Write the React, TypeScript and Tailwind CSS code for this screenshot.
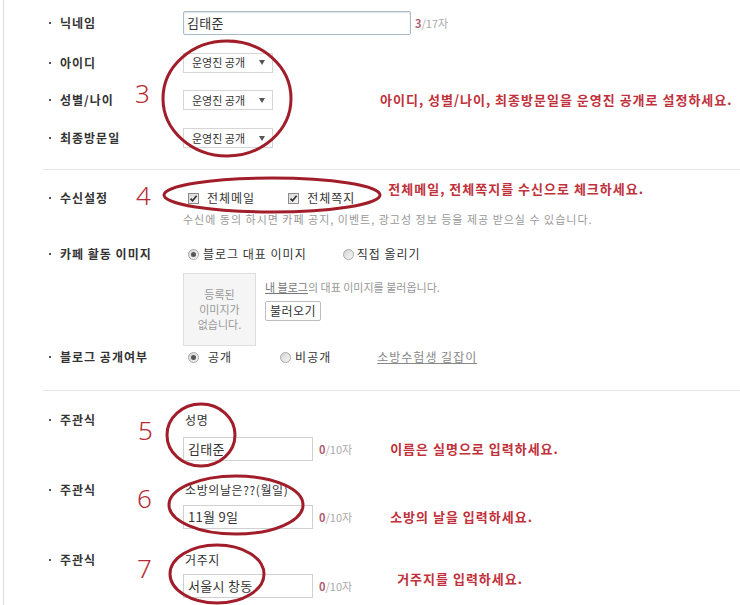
import React from "react";

function Label({ children }: { children: React.ReactNode }) {
  return (
    <div className="w-[179px] shrink-0 h-[20px] pl-[45px] flex items-center font-bold text-[12px] tracking-[1px] text-[#333]">
      <span className="w-[2px] h-[2px] bg-[#555] mr-[9px] shrink-0" />
      <span className="whitespace-nowrap">{children}</span>
    </div>
  );
}

function Select() {
  return (
    <div className="w-[90px] h-[20px] border border-[#d6d6d6] bg-white flex items-center justify-between pl-[8px] pr-[7px] text-[11px] text-[#333]">
      <span className="whitespace-nowrap">운영진 공개</span>
      <svg width="6" height="5" viewBox="0 0 6 5">
        <polygon points="0,0 6,0 3,5" fill="#555" />
      </svg>
    </div>
  );
}

function Checkbox() {
  return (
    <span className="w-[11px] h-[11px] border border-[#8c8c8c] bg-gradient-to-br from-[#d8d8d8] to-[#f7f7f7] flex items-center justify-center shrink-0">
      <svg width="9" height="9" viewBox="0 0 9 9">
        <path d="M1.5 4.6 L3.6 6.8 L7.6 1.8" stroke="#333" strokeWidth="1.7" fill="none" />
      </svg>
    </span>
  );
}

function Radio({ on }: { on?: boolean }) {
  return (
    <span className="w-[11px] h-[11px] rounded-full border border-[#a8a8a8] bg-gradient-to-br from-[#d4d4d4] to-[#f8f8f8] flex items-center justify-center shrink-0">
      {on ? <span className="w-[5px] h-[5px] rounded-full bg-[#555]" /> : null}
    </span>
  );
}

function Counter({ n, max }: { n: string; max: string }) {
  return (
    <span className="text-[11px] whitespace-nowrap">
      <b className="text-[#b06070]">{n}</b>
      <span className="text-[#aaa]">/{max}자</span>
    </span>
  );
}

function TextBox({ value }: { value: string }) {
  return (
    <div className="w-[130px] h-[24px] border border-[#d0d0d0] bg-white flex items-center pl-[4px] text-[13px] tracking-[0.3px] text-[#333] whitespace-nowrap">
      {value}
    </div>
  );
}

function Red({ children, className }: { children: React.ReactNode; className?: string }) {
  return (
    <span className={"text-[13px] font-bold tracking-[1px] text-[#c0313b] whitespace-nowrap " + (className ?? "")}>
      {children}
    </span>
  );
}

export default function App() {
  return (
    <div className="relative w-[740px] h-[605px] overflow-hidden bg-white font-['Noto_Sans_CJK_KR','Noto_Sans',sans-serif] text-[12px] text-[#333]">
      <div className="ml-[3px] h-full border-l border-[#dcdcdc] flex flex-col">
        {/* section A */}
        <div className="flex items-center h-[45px]">
          <Label>닉네임</Label>
          <div className="w-[228px] h-[24px] border border-[#a9bac9] rounded-[2px] shadow-[inset_0_1px_2px_rgba(0,0,0,0.12)] bg-white flex items-center pl-[3px] text-[13px] tracking-[0.3px] text-[#333]">
            김태준
          </div>
          <span className="ml-[4px]">
            <Counter n="3" max="17" />
          </span>
        </div>
        <div className="flex items-center h-[35px]">
          <Label>아이디</Label>
          <Select />
        </div>
        <div className="flex items-center h-[40px]">
          <Label>성별/나이</Label>
          <Select />
          <Red className="ml-[107px]">아이디, 성별/나이, 최종방문일을 운영진 공개로 설정하세요.</Red>
        </div>
        <div className="flex items-center h-[36px]">
          <Label>최종방문일</Label>
          <Select />
        </div>
        <div className="h-[13px] shrink-0" />
        <div className="ml-[39px] border-t border-[#e6e6e6]" />

        {/* section B */}
        <div className="flex pt-[18px]">
          <Label>수신설정</Label>
          <div className="flex flex-col">
            <div className="h-[20px] flex items-center text-[12px] tracking-[1px]">
              <span className="ml-[5px]">
                <Checkbox />
              </span>
              <span className="ml-[8px]">전체메일</span>
              <span className="ml-[33px]">
                <Checkbox />
              </span>
              <span className="ml-[8px]">전체쪽지</span>
              <Red className="ml-[33px] mb-[18px]">전체메일, 전체쪽지를 수신으로 체크하세요.</Red>
            </div>
            <div className="mt-[3px] h-[16px] leading-[16px] text-[11px] tracking-[1px] text-[#999] whitespace-nowrap">
              수신에 동의 하시면 카페 공지, 이벤트, 광고성 정보 등을 제공 받으실 수 있습니다.
            </div>
          </div>
        </div>

        <div className="flex items-center h-[20px] mt-[17px] tracking-[1px]">
          <Label>카페 활동 이미지</Label>
          <span className="ml-[5px]">
            <Radio on />
          </span>
          <span className="ml-[4px]">블로그 대표 이미지</span>
          <span className="ml-[36px]">
            <Radio />
          </span>
          <span className="ml-[3px]">직접 올리기</span>
        </div>
        <div className="flex mt-[9px] pl-[179px]">
          <div className="w-[73px] h-[73px] bg-[#f5f5f5] border border-[#dedede] flex flex-col items-center justify-center text-[11px] leading-[15px] text-[#999]">
            <span>등록된</span>
            <span>이미지가</span>
            <span>없습니다.</span>
          </div>
          <div className="ml-[9px] flex flex-col items-start">
            <div className="mt-[6px] h-[16px] leading-[16px] text-[11px] text-[#999] whitespace-nowrap">
              <span className="underline text-[#777]">내 블로그</span>의 대표 이미지를 불러옵니다.
            </div>
            <div className="mt-[6px] h-[20px] px-[4px] border border-[#bdbdbd] rounded-[2px] bg-white flex items-center text-[12px] tracking-[0.5px] text-[#333]">
              불러오기
            </div>
          </div>
        </div>
        <div className="flex items-center h-[20px] mt-[1px] tracking-[1px]">
          <Label>블로그 공개여부</Label>
          <span className="ml-[5px]">
            <Radio on />
          </span>
          <span className="ml-[9px]">공개</span>
          <span className="ml-[48px]">
            <Radio />
          </span>
          <span className="ml-[4px]">비공개</span>
          <span className="ml-[46px] underline text-[#888]">소방수험생 길잡이</span>
        </div>
        <div className="mt-[23px] ml-[39px] border-t border-[#e6e6e6]" />

        {/* section C */}
        <div className="flex mt-[19px]">
          <Label>주관식</Label>
          <div className="flex flex-col">
            <div className="h-[20px] flex items-center pl-[2px] tracking-[0.6px]">성명</div>
            <div className="mt-[7px] h-[24px] flex items-center">
              <TextBox value="김태준" />
              <span className="ml-[6px]">
                <Counter n="0" max="10" />
              </span>
              <Red className="ml-[38px]">이름은 실명으로 입력하세요.</Red>
            </div>
          </div>
        </div>
        <div className="flex mt-[19px]">
          <Label>주관식</Label>
          <div className="flex flex-col">
            <div className="h-[20px] flex items-center pl-[2px] tracking-[0.6px]">소방의날은??(월일)</div>
            <div className="mt-[5px] h-[24px] flex items-center">
              <TextBox value="11월 9일" />
              <span className="ml-[6px]">
                <Counter n="0" max="10" />
              </span>
              <Red className="ml-[38px]">소방의 날을 입력하세요.</Red>
            </div>
          </div>
        </div>
        <div className="flex mt-[21px]">
          <Label>주관식</Label>
          <div className="flex flex-col">
            <div className="h-[20px] flex items-center pl-[2px] tracking-[0.6px]">거주지</div>
            <div className="mt-[4px] h-[24px] flex items-center">
              <TextBox value="서울시 창동" />
              <span className="ml-[6px]">
                <Counter n="0" max="10" />
              </span>
              <Red className="ml-[45px] mb-[14px]">거주지를 입력하세요.</Red>
            </div>
          </div>
        </div>
      </div>

      {/* annotation overlay */}
      <div className="absolute inset-0 pointer-events-none">
        <svg className="absolute inset-0" width="740" height="605" viewBox="0 0 740 605">
          <g fill="none" stroke="#a11d2a" strokeWidth="3">
            <ellipse cx="227" cy="98.5" rx="64" ry="57.5" />
            <ellipse cx="272" cy="195" rx="108" ry="17" />
            <ellipse cx="201" cy="435" rx="34" ry="31" />
            <ellipse cx="236" cy="505" rx="67" ry="29" />
            <ellipse cx="217" cy="574" rx="47" ry="29" />
          </g>
        </svg>
        <span className="absolute left-[135px] top-[80px] text-[26px] leading-none font-light text-[#b72a33] font-['Noto_Sans',sans-serif]">3</span>
        <span className="absolute left-[136px] top-[182px] text-[26px] leading-none font-light text-[#b72a33] font-['Noto_Sans',sans-serif]">4</span>
        <span className="absolute left-[138px] top-[417px] text-[26px] leading-none font-light text-[#b72a33] font-['Noto_Sans',sans-serif]">5</span>
        <span className="absolute left-[137px] top-[485px] text-[26px] leading-none font-light text-[#b72a33] font-['Noto_Sans',sans-serif]">6</span>
        <span className="absolute left-[137px] top-[555px] text-[26px] leading-none font-light text-[#b72a33] font-['Noto_Sans',sans-serif]">7</span>
      </div>
    </div>
  );
}
